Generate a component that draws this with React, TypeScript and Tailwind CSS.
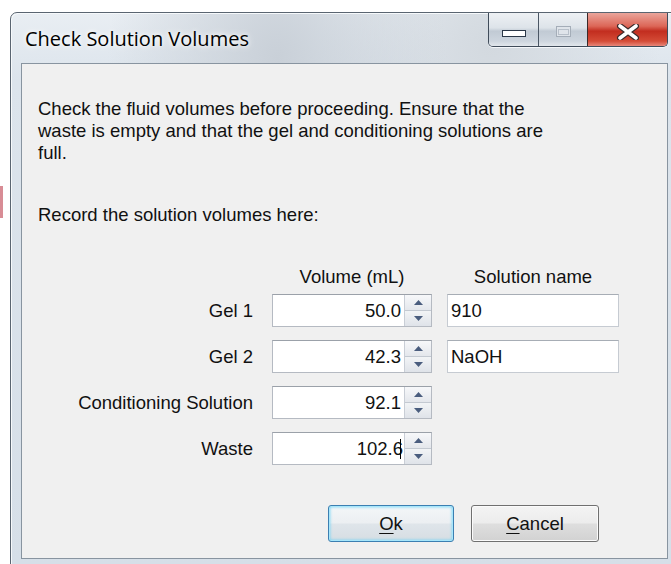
import React from "react";

function Spinner() {
  return (
    <div className="flex w-[27px] flex-col border-l border-[#c9ced6] bg-[#eef0f3]">
      <div className="flex flex-1 items-center justify-center border-b border-[#c3c9d1] bg-[linear-gradient(180deg,#f7f8fa,#e4e7ec)]">
        <svg width="9" height="5" viewBox="0 0 9 5">
          <path d="M0 5 L4.5 0 L9 5 Z" fill="#4a5d7e" />
        </svg>
      </div>
      <div className="flex flex-1 items-center justify-center bg-[linear-gradient(180deg,#f2f4f6,#dfe3e9)]">
        <svg width="9" height="5" viewBox="0 0 9 5">
          <path d="M0 0 L9 0 L4.5 5 Z" fill="#4a5d7e" />
        </svg>
      </div>
    </div>
  );
}

function Row({
  label,
  value,
  name,
  caret,
}: {
  label: string;
  value: string;
  name?: string;
  caret?: boolean;
}) {
  return (
    <div className="flex h-[33px] items-center">
      <span className="w-[231px] text-right">{label}</span>
      <div className="ml-[19px] flex h-[33px] w-[160px] border border-[#b5bac2] border-t-[#9ba1a9] bg-white">
        <div className="flex flex-1 items-center justify-end pr-[3px]">
          {value}
          {caret && <span className="ml-[-3px] h-[20px] w-[1px] bg-black" />}
        </div>
        <Spinner />
      </div>
      {name !== undefined && (
        <div className="ml-[15px] flex h-[33px] w-[172px] items-center border border-[#c6cbd2] border-t-[#a7adb5] bg-white pl-[3px]">
          {name}
        </div>
      )}
    </div>
  );
}

function CaptionButtons() {
  return (
    <div className="mr-[9px] ml-auto flex h-[34px] overflow-hidden rounded-b-[5px] border border-t-0 border-[#404c5a] shadow-[0_1px_0_#f4f7fa]">
      <div className="flex w-[50px] items-center justify-center border-r border-[#4a5664] bg-[linear-gradient(180deg,#eef1f4_0%,#dde3e9_45%,#c1cad4_55%,#cdd5de_85%,#e2e7ec_100%)] pt-[8px]">
        <svg width="24" height="7" viewBox="0 0 24 7">
          <rect x="0.5" y="0.5" width="23" height="6" fill="#ffffff" stroke="#2b3848" />
        </svg>
      </div>
      <div className="flex w-[49px] items-center justify-center border-r border-[#3a2a2a] bg-[linear-gradient(180deg,#eef1f4_0%,#dde3e9_45%,#c1cad4_55%,#cdd5de_85%,#e2e7ec_100%)] pt-[3px]">
        <svg width="15" height="11" viewBox="0 0 15 11">
          <rect x="0.5" y="0.5" width="14" height="10" fill="#dfe4ea" stroke="#a4adb8" />
          <rect x="2.5" y="3.5" width="10" height="5" fill="none" stroke="#b8c0ca" />
        </svg>
      </div>
      <div className="flex w-[79px] items-center justify-center bg-[linear-gradient(180deg,#eaa59b_0%,#dc6657_40%,#c22d1f_55%,#d44b36_85%,#e8877a_100%)] pt-[4px]">
        <svg width="24" height="16" viewBox="0 0 24 16">
          <path d="M4 2 L20 14 M20 2 L4 14" stroke="#3c2b2b" strokeWidth="6" strokeLinecap="round" />
          <path d="M4 2 L20 14 M20 2 L4 14" stroke="#ffffff" strokeWidth="3.6" strokeLinecap="round" />
        </svg>
      </div>
    </div>
  );
}

export default function App() {
  return (
    <div className="relative h-[564px] w-[671px] overflow-hidden bg-white font-['Liberation_Sans',Arial,sans-serif] text-[18.5px] leading-[22px] text-[#111]">
      {/* something behind the window peeking out at the left */}
      <span className="absolute left-0 top-[186px] h-[32px] w-[3px] bg-[#d88c95]" />

      <div className="pt-[12px] pl-[10px]">
        <div className="w-[668px] rounded-t-[7px] border border-[#5a6571] bg-[radial-gradient(ellipse_at_40%_8%,#c9d0d8_0%,transparent_30%),radial-gradient(ellipse_at_72%_6%,#d3d9df_0%,transparent_25%),linear-gradient(180deg,#e9eef3_0%,#dce4ec_12%,#d6dfe8_100%)] pb-[10px] shadow-[inset_1px_1px_0_#f6f9fb,inset_-1px_0_0_#f6f9fb]">
          {/* title bar */}
          <div className="flex h-[50px]">
            <span className="mt-[14px] ml-[14px] font-['Open_Sans','Noto_Sans',sans-serif] text-[20px] leading-[24px] text-black [text-shadow:0_0_8px_#fff,0_0_4px_#fff]">
              Check Solution Volumes
            </span>
            <CaptionButtons />
          </div>

          {/* client area */}
          <div className="ml-[10px] h-[496px] w-[647px] border border-[#8894a0] bg-[#f0f0f0]">
            <p className="pt-[34px] pl-[16px]">
              Check the fluid volumes before proceeding. Ensure that the
              <br />
              waste is empty and that the gel and conditioning solutions are
              <br />
              full.
            </p>
            <p className="mt-[40px] pl-[16px]">Record the solution volumes here:</p>

            <div className="mt-[40px] flex">
              <span className="ml-[250px] w-[160px] text-center">Volume (mL)</span>
              <span className="ml-[15px] w-[172px] text-center">Solution name</span>
            </div>

            <div className="mt-[6px] flex flex-col gap-[13px]">
              <Row label="Gel 1" value="50.0" name="910" />
              <Row label="Gel 2" value="42.3" name="NaOH" />
              <Row label="Conditioning Solution" value="92.1" />
              <Row label="Waste" value="102.6" caret />
            </div>

            <div className="mt-[40px] flex justify-end gap-[17px] pr-[68px]">
              <button className="h-[37px] w-[126px] rounded-[3px] border border-[#3c7fb1] bg-[linear-gradient(180deg,#f3f6f8_0%,#eceff2_48%,#dfe5ea_52%,#d6dde3_100%)] shadow-[inset_0_0_0_1px_#a6e6fb,inset_0_0_3px_1px_#6fd3f5]">
                <span className="underline underline-offset-[3px]">O</span>k
              </button>
              <button className="h-[37px] w-[128px] rounded-[3px] border border-[#707070] bg-[linear-gradient(180deg,#f4f4f4_0%,#ececec_48%,#dedede_52%,#d2d2d2_100%)] shadow-[inset_0_0_0_1px_#fbfbfb]">
                <span className="underline underline-offset-[3px]">C</span>ancel
              </button>
            </div>
          </div>
        </div>
      </div>
    </div>
  );
}
